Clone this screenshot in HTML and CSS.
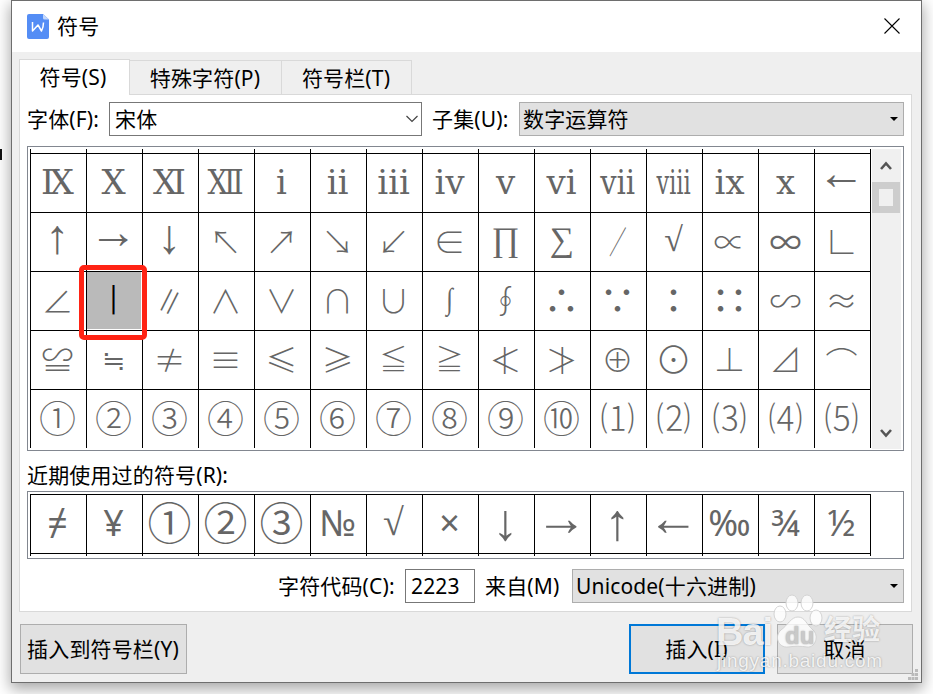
FILE: index.html
```html
<!DOCTYPE html>
<html lang="zh-CN">
<head>
    <meta charset="UTF-8">
    <title>符号</title>
    <link rel="stylesheet" href="styles.css">
</head>
<body>
    <div class="caret-mark"></div>
    <div class="dialog">
        <div class="title-bar">
            <svg class="logo" width="22" height="25" viewBox="0 0 22 25">
                <path d="M2 0H16L22 5.500V23Q22 25 20 25H2Q0 25 0 23V2Q0 0 2 0Z" fill="#548df5"/>
                <path d="M16 0L22 5.500H17.500Q16 5.500 16 4Z" fill="#c3d7fb"/>
                <path d="M5.500 8V17L11 11L14.500 17Q16.500 13 16.500 8.500" fill="none" stroke="#fff" stroke-width="1.500" stroke-linejoin="round"/>
            </svg>
            <span class="title">符号</span>
            <svg class="close" width="16" height="16" viewBox="0 0 16 16">
                <path d="M.5 .5L15.500 15.500M15.500 .5L.5 15.500" stroke="#000" stroke-width="1.100"/>
            </svg>
        </div>

        <div class="tabs">
            <div class="tab active">符号(S)</div>
            <div class="tab tab-special">特殊字符(P)</div>
            <div class="tab tab-bar">符号栏(T)</div>
        </div>

        <div class="panel">
            <div class="form-row">
                <label class="font-label">字体(F):</label>
                <div class="combo font-combo">宋体
                    <svg width="12" height="8" viewBox="0 0 12 8"><path d="M.5 1L6 6.500L11.500 1" fill="none" stroke="#444" stroke-width="1.200"/></svg>
                </div>
                <label class="subset-label">子集(U):</label>
                <div class="combo gray subset-combo">数字运算符
                    <svg width="8" height="4" viewBox="0 0 8 4"><path d="M0 0H8L4 4Z"/></svg>
                </div>
            </div>

            <div class="symbol-box">
                <div class="symbols">
                    <span class="roman">Ⅸ</span><span class="roman">Ⅹ</span><span class="roman">Ⅺ</span><span class="roman narrow">Ⅻ</span><span class="roman">ⅰ</span><span class="roman">ⅱ</span><span class="roman">ⅲ</span><span class="roman">ⅳ</span><span class="roman">ⅴ</span><span class="roman">ⅵ</span><span class="roman narrow">ⅶ</span><span class="roman narrower">ⅷ</span><span class="roman">ⅸ</span><span class="roman">ⅹ</span><span class="arrow">←</span>
                    <span class="arrow vert">↑</span><span class="arrow">→</span><span class="arrow vert">↓</span><span>↖</span><span>↗</span><span>↘</span><span>↙</span><span>∈</span><span class="greek">∏</span><span class="greek">∑</span><span class="slash">∕</span><span class="greek">√</span><span>∝</span><span class="mid">∞</span><span>∟</span>
                    <span>∠</span><span class="selected">∣</span><span>∥</span><span>∧</span><span>∨</span><span>∩</span><span>∪</span><span class="integral">∫</span><span>∮</span><span class="dots">∴</span><span class="dots">∵</span><span class="dots">∶</span><span class="dots">∷</span><span>∽</span><span>≈</span>
                    <span>≌</span><span class="approx">≒</span><span>≠</span><span>≡</span><span>≤</span><span>≥</span><span class="approx">≦</span><span class="approx">≧</span><span>≮</span><span>≯</span><span>⊕</span><span class="num">⊙</span><span>⊥</span><span>⊿</span><span class="arc">⌒</span>
                    <span class="num">①</span><span class="num">②</span><span class="num">③</span><span class="num">④</span><span class="num">⑤</span><span class="num">⑥</span><span class="num">⑦</span><span class="num">⑧</span><span class="num">⑨</span><span class="num">⑩</span><span class="paren">⑴</span><span class="paren">⑵</span><span class="paren">⑶</span><span class="paren">⑷</span><span class="paren">⑸</span>
                </div>
                <div class="scrollbar">
                    <svg class="up" width="12" height="9" viewBox="0 0 12 9"><path d="M1 8L6 2.500L11 8" fill="none" stroke="#555" stroke-width="2.600"/></svg>
                    <div class="thumb"></div>
                    <svg class="down" width="12" height="9" viewBox="0 0 12 9"><path d="M1 1L6 6.500L11 1" fill="none" stroke="#555" stroke-width="2.600"/></svg>
                </div>
                <div class="highlight"></div>
            </div>

            <div class="recent-label">近期使用过的符号(R):</div>
            <div class="recent-box">
                <div class="symbols recent">
                    <span>≠</span><span>¥</span><span class="num">①</span><span class="num">②</span><span class="num">③</span><span>№</span><span class="root">√</span><span>×</span><span class="arrow vert">↓</span><span class="arrow">→</span><span class="arrow vert">↑</span><span class="arrow">←</span><span>‰</span><span>¾</span><span>½</span>
                </div>
            </div>

            <div class="form-row code-row">
                <label class="code-label">字符代码(C):</label>
                <div class="combo code-input">2223</div>
                <label class="from-label">来自(M)</label>
                <div class="combo gray from-combo">Unicode(十六进制)
                    <svg width="8" height="4" viewBox="0 0 8 4"><path d="M0 0H8L4 4Z"/></svg>
                </div>
            </div>
        </div>

        <div class="footer">
            <div class="btn btn-add">插入到符号栏(Y)</div>
            <div class="btn btn-insert">插入(I)</div>
            <div class="btn btn-cancel">取消</div>
        </div>
        <svg class="grip" width="11" height="11" viewBox="0 0 11 11">
            <path d="M7 0h3v3h-3zM3.500 4h3v3h-3zM7 4h3v3h-3zM0 8h3v3h-3zM3.500 8h3v3h-3zM7 8h3v3h-3z" fill="#bbb"/>
        </svg>
    </div>

    <div class="watermark">
        <svg class="paw" width="52" height="56" viewBox="0 0 52 56">
            <ellipse cx="7" cy="20" rx="6" ry="8"/>
            <ellipse cx="19" cy="9" rx="6" ry="8"/>
            <ellipse cx="34" cy="9" rx="6" ry="8"/>
            <ellipse cx="43" cy="24" rx="6" ry="8"/>
            <path d="M25 23C32 23 33 30 40 36C46 41 43 54 34 53C28 52 22 52 15 53C5 54 1 42 8 36C15 31 18 23 25 23Z"/>
        </svg>
        <span class="wm-bai">Bai</span>
        <span class="wm-du">du</span>
        <span class="wm-exp">经验</span>
        <span class="wm-url">jingyan.baidu.com</span>
    </div>
</body>
</html>
```
FILE: styles.css
```css
* {
    box-sizing: border-box;
}
body {
    margin: 0;
    height: 694px;
    overflow: hidden;
    position: relative;
    background: #fff;
    font-family: "Noto Sans", "Noto Sans CJK SC", sans-serif;
    font-size: 21px;
    letter-spacing: 0.15px;
    line-height: 32px;
    color: #000;
    white-space: nowrap;
}
svg {
    display: block;
    flex: none;
}
.caret-mark {
    position: absolute;
    left: 0;
    top: 149px;
    width: 2px;
    height: 11px;
    background: #111;
}
.dialog {
    position: relative;
    width: 911px;
    height: 683px;
    margin-left: 11px;
    border: 1px solid #6e6e6e;
    background: #efefef;
    box-shadow: 0 5px 14px 1px rgba(0, 0, 0, 0.35);
}
.title-bar {
    display: flex;
    align-items: center;
    height: 51px;
    padding: 0 21px 1px 15px;
    background: #fff;
}
.title {
    flex: 1;
    margin-left: 8px;
}

/* 标签页 */
.tabs {
    display: flex;
    align-items: flex-end;
    height: 42px;
    padding-left: 7px;
}
.tab {
    height: 34px;
    padding-right: 1px;
    line-height: 35px;
    text-align: center;
    border: 1px solid #d9d9d9;
    border-left: none;
    border-bottom: none;
}
.tab.active {
    position: relative;
    z-index: 1;
    width: 111px;
    height: 36px;
    margin-bottom: -1px;
    padding-right: 3px;
    border-left: 1px solid #d9d9d9;
    background: #fff;
}
.tab-special {
    width: 152px;
}
.tab-bar {
    width: 130px;
}

.panel {
    width: 893px;
    height: 518px;
    margin-left: 7px;
    padding: 7px;
    border: 1px solid #d9d9d9;
    background: #fff;
}
.form-row {
    display: flex;
    height: 34px;
    line-height: 34px;
}
.font-label {
    width: 82px;
}
.combo {
    display: flex;
    align-items: center;
    justify-content: space-between;
    height: 34px;
    padding: 0 3px 0 5px;
    border: 1px solid #777;
    background: #fff;
}
.combo.gray {
    padding: 0 5px 0 3px;
    border-color: #adadad;
    background: #e1e1e1;
}
.font-combo {
    width: 313px;
}
.subset-label {
    width: 97px;
    padding-left: 10px;
}
.subset-combo {
    width: 385px;
}

/* 符号表格 */
.symbol-box {
    position: relative;
    display: flex;
    width: 877px;
    height: 305px;
    margin-top: 10px;
    padding: 2px;
    border: 1px solid #828790;
}
.symbols {
    display: grid;
    grid-template-columns: repeat(15, 56px);
    grid-auto-rows: 59px;
    width: 841px;
    height: 299px;
    padding-top: 4px;
    overflow: hidden;
    letter-spacing: 0;
    color: #666;
    background: linear-gradient(to right, #000 1px, transparent 1px) 0 0 / 56px 100%,
                linear-gradient(to bottom, #000 1px, transparent 1px) 0 4px / 100% 59px;
}
.symbols span {
    height: 59px;
    padding-right: 1px;
    line-height: 56px;
    text-align: center;
    font-family: "Noto Sans CJK SC", sans-serif;
    font-weight: 300;
    font-size: 32px;
}
.symbols .roman {
    line-height: 59px;
    font-family: "Liberation Serif", "DejaVu Serif", serif;
    font-size: 34px;
}
.symbols .narrow {
    transform: scaleX(0.85);
}
.symbols .narrower {
    transform: scaleX(0.66);
}
.symbols .arrow,
.symbols .integral,
.symbols .greek {
    font-family: "Liberation Serif", serif;
    font-size: 34px;
    line-height: 55px;
}
.symbols .arrow {
    font-size: 32px;
    line-height: 47px;
    transform: scale(1.5);
}
.symbols .vert {
    line-height: 53px;
}
.symbols .integral {
    font-size: 30px;
    line-height: 56px;
    transform: scaleX(0.8);
}
.symbols .slash {
    transform: scaleX(0.55);
}
.symbols .mid {
    font-weight: 400;
}
.symbols .dots {
    font-weight: 500;
    font-size: 35px;
}
.symbols .approx {
    font-size: 28px;
}
.symbols .arc {
    line-height: 62px;
}
.symbols .num {
    font-size: 37px;
}
.symbols .paren {
    font-size: 34px;
}
.symbols .selected {
    margin: 1px 1px 1px 1px;
    height: 57px;
    line-height: 52px;
    font-size: 40px;
    color: #000;
    background: #bababa;
}
.scrollbar {
    width: 29px;
    height: 300px;
    margin-left: 1px;
    padding-top: 12px;
    background: #f0f0f0;
}
.scrollbar svg {
    margin-left: 8px;
}
.thumb {
    width: 28px;
    height: 31px;
    margin: 12px 0 216px;
    border: 7px solid #cdcdcd;
    background: #f0f0f0;
}
.highlight {
    position: absolute;
    left: 51px;
    top: 118px;
    width: 68px;
    height: 75px;
    border: 5px solid #ff2314;
    border-radius: 5px;
}

/* 近期使用 */
.recent-label {
    height: 40px;
    padding-top: 8px;
}
.recent-box {
    width: 877px;
    height: 68px;
    padding: 2px;
    border: 1px solid #828790;
}
.symbols.recent {
    height: 62px;
    padding-top: 0;
    background-position: 0 0, 0 0;
}
.recent span {
    line-height: 57px;
    font-family: "Noto Sans", "Noto Sans CJK SC", sans-serif;
    font-weight: 450;
    font-size: 36px;
}
.recent .num {
    line-height: 58px;
    font-weight: 350;
    font-size: 44px;
}
.recent .root {
    font-family: "Liberation Serif", serif;
    font-size: 38px;
    line-height: 57px;
}
.recent .arrow {
    line-height: 52px;
    font-weight: 400;
    transform: scale(1.6);
}
.recent .vert {
    line-height: 59px;
}
.code-row {
    margin-top: 10px;
    padding-left: 251px;
}
.code-label {
    width: 127px;
}
.code-input {
    width: 70px;
}
.from-label {
    width: 97px;
    padding-left: 10px;
}
.from-combo {
    width: 332px;
}

/* 底部按钮 */
.footer {
    display: flex;
    padding: 12px 8px 0;
}
.btn {
    height: 50px;
    padding-right: 1px;
    line-height: 48px;
    text-align: center;
    border: 1px solid #adadad;
    background: #e1e1e1;
}
.btn-add {
    width: 167px;
}
.btn-insert {
    width: 136px;
    margin-left: 442px;
    line-height: 46px;
    border: 2px solid #0078d7;
}
.btn-cancel {
    width: 136px;
    margin-left: 12px;
}
.grip {
    position: absolute;
    right: 2px;
    bottom: 2px;
}

/* 水印 */
.watermark {
    position: absolute;
    left: 716px;
    top: 594px;
    width: 170px;
    height: 82px;
    color: rgba(255, 255, 255, 0.85);
    text-shadow: 0 0 2px rgba(0, 0, 0, 0.35);
    font-family: "Liberation Sans", "Noto Sans CJK SC", sans-serif;
    font-weight: bold;
}
.watermark span,
.paw {
    position: absolute;
}
.paw {
    left: 57px;
    top: 0;
    fill: rgba(255, 255, 255, 0.8);
    stroke: #cfcfcf;
    stroke-width: 0.9;
}
.watermark .wm-bai {
    left: 0;
    top: 22px;
    font-size: 38px;
    letter-spacing: -1px;
}
.watermark .wm-du {
    left: 69px;
    top: 26px;
    font-size: 24px;
    color: #c9c9c9;
}
.watermark .wm-exp {
    left: 108px;
    top: 21px;
    font-size: 28px;
}
.watermark .wm-url {
    left: 1px;
    top: 51px;
    font-size: 19px;
    font-weight: normal;
    letter-spacing: 0.75px;
}
```
